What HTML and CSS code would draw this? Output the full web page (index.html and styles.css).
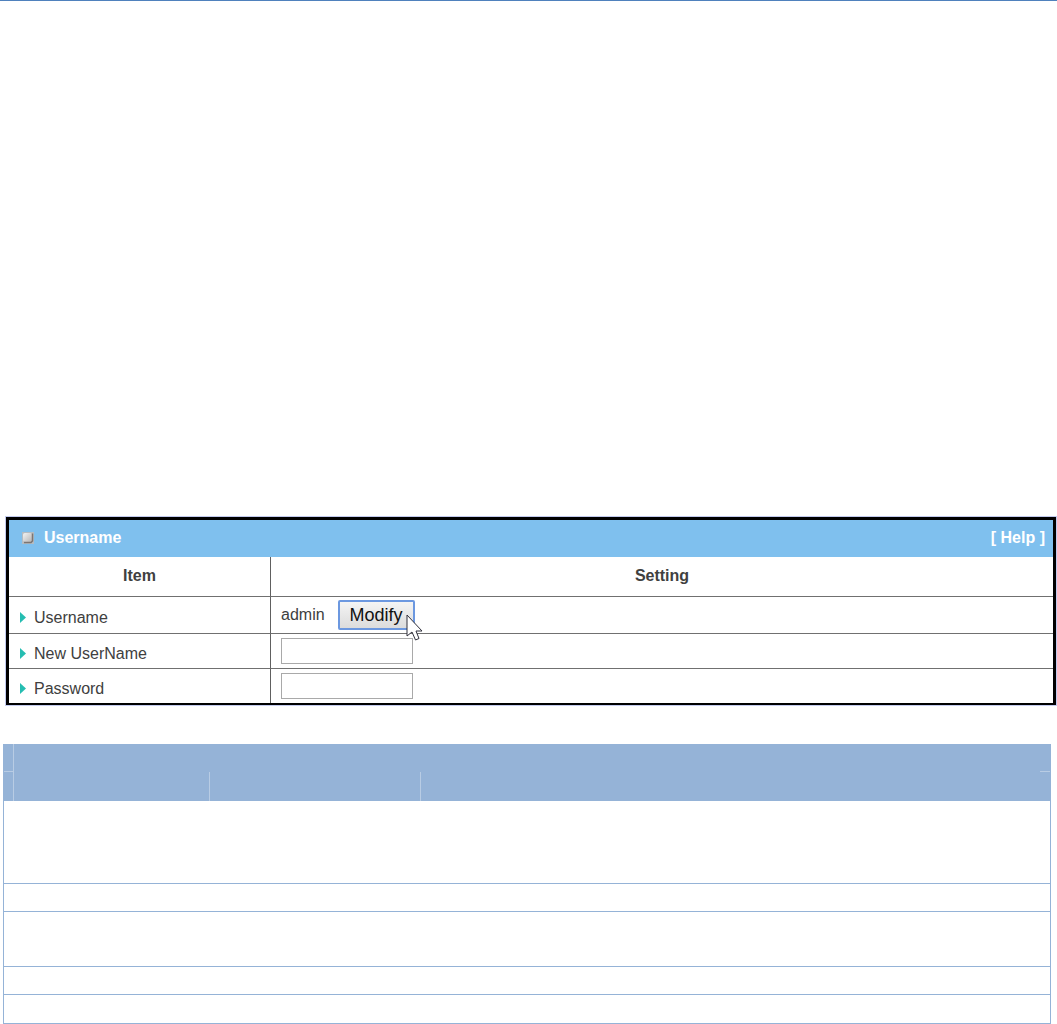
FILE: index.html
```html
<!DOCTYPE html>
<html lang="en">
<head>
<meta charset="utf-8">
<title>Username</title>
<link rel="stylesheet" href="styles.css">
</head>
<body>
<main class="page">
  <section class="panel">
    <header class="panel-head">
      <svg class="bullet" width="12" height="12" viewBox="0 0 12 12" aria-hidden="true">
        <defs><linearGradient id="g" x1="0" y1="0" x2="1" y2="1"><stop offset="0" stop-color="#f4f4f4"/><stop offset="1" stop-color="#b5b5b5"/></linearGradient></defs>
        <rect width="12" height="12" fill="#b4bcc2"/>
        <rect x="1" y="1" width="9" height="9" rx="2" fill="url(#g)"/>
        <path d="M10.500 1.500V9L9 10.500H2" fill="none" stroke="#7b7573" stroke-width="1.500"/>
      </svg>
      <h1 class="panel-title">Username</h1>
      <a class="help" href="#help">[ Help ]</a>
    </header>
    <table class="settings">
      <thead>
        <tr><th class="item" scope="col">Item</th><th scope="col">Setting</th></tr>
      </thead>
      <tbody>
        <tr class="row-tall">
          <th scope="row"><svg class="arrow" width="6" height="11" viewBox="0 0 6 11" aria-hidden="true"><path d="M0 0L6 5.500L0 11Z"/></svg>Username</th>
          <td>
            <div class="account">
              <span>admin</span>
              <span class="modify-wrap">
                <button class="modify" type="button">Modify</button>
                <svg class="cursor" width="17" height="28" viewBox="0 0 17 28" aria-hidden="true"><path d="M1 1V22L6 18L9.500 26L13 24.500L10 17H16Z"/></svg>
              </span>
            </div>
          </td>
        </tr>
        <tr>
          <th scope="row"><svg class="arrow" width="6" height="11" viewBox="0 0 6 11" aria-hidden="true"><path d="M0 0L6 5.500L0 11Z"/></svg><label for="new-name">New UserName</label></th>
          <td><input class="field" id="new-name" type="text"></td>
        </tr>
        <tr>
          <th scope="row"><svg class="arrow" width="6" height="11" viewBox="0 0 6 11" aria-hidden="true"><path d="M0 0L6 5.500L0 11Z"/></svg><label for="password">Password</label></th>
          <td><input class="field" id="password" type="password"></td>
        </tr>
      </tbody>
    </table>
  </section>

  <table class="details">
    <colgroup><col class="col-edge"><col class="col-name"><col class="col-value"><col><col class="col-edge"></colgroup>
    <thead>
      <tr class="head-top"><td class="rule-right rule-bottom"></td><td colspan="3"></td><td class="rule-bottom"></td></tr>
      <tr class="head-bottom"><td class="rule-right"></td><td class="rule-right"></td><td class="rule-right"></td><td colspan="2"></td></tr>
    </thead>
    <tbody>
      <tr class="lines-3"><td colspan="5"></td></tr>
      <tr class="lines-1"><td colspan="5"></td></tr>
      <tr class="lines-2"><td colspan="5"></td></tr>
      <tr class="lines-1"><td colspan="5"></td></tr>
      <tr class="lines-1"><td colspan="5"></td></tr>
    </tbody>
  </table>
</main>
</body>
</html>
```
FILE: styles.css
```css
* { box-sizing: border-box; }

body {
  margin: 0;
  background: #fff;
  color: #404040;
  font-family: "Liberation Sans", Arial, sans-serif;
  font-size: 16px;
  line-height: 20px;
}

.page {
  border-top: 1px solid #4f81bd;
  padding-top: 516px;
}

.panel {
  margin: 0 1px 39px 6px;
  border: 3px solid #000;
  border-bottom-width: 2px;
  box-shadow: 0 0 0 1px #c3cbee;
}

.panel-head {
  display: flex;
  align-items: center;
  height: 37px;
  padding: 0 8px 2px 13px;
  background: #7fc0ee;
  color: #fff;
}

.panel-title {
  flex: 1;
  margin: 0 0 0 10px;
  font-size: 16px;
}

.help {
  color: #fff;
  font-weight: bold;
  text-decoration: none;
}

.settings {
  width: 100%;
  border-collapse: separate;
  border-spacing: 0;
  table-layout: fixed;
}

.settings th,
.settings td {
  height: 35px;
  padding: 0 10px;
  border-bottom: 1px solid #707070;
  text-align: left;
  vertical-align: middle;
}

.settings thead th {
  height: 40px;
  padding-bottom: 2px;
  text-align: center;
}

.settings .item { width: 262px; }
.settings th:first-child { border-right: 1px solid #606060; }
.settings .row-tall > * { height: 37px; }
.settings tbody th { padding: 6px 10px 0 11px; font-weight: normal; }
.settings tbody tr:last-child > * { height: 34px; border-bottom: 0; }

.arrow {
  margin-right: 8px;
  fill: #25bdb1;
}

.account {
  display: flex;
  align-items: center;
  gap: 13px;
}

.modify-wrap {
  position: relative;
  display: flex;
}

.modify {
  width: 77px;
  height: 30px;
  padding: 0;
  border: 2px solid #6c98e0;
  border-radius: 2px;
  background: linear-gradient(#f4f4f4, #dcdcdc);
  color: #111;
  font: 18px/22px "Liberation Sans", Arial, sans-serif;
}

.cursor {
  position: absolute;
  top: 14px;
  right: -8px;
  z-index: 1;
  fill: #fff;
  stroke: #30303c;
  stroke-width: 1;
}

.field {
  display: block;
  width: 132px;
  height: 26px;
  padding: 2px 4px;
  border: 1px solid #a9a9a9;
  background: #fff;
  font: inherit;
}

.details {
  width: calc(100% - 9px);
  margin-left: 3px;
  border: 1px solid #95b3d7;
  border-top: 0;
  border-collapse: separate;
  border-spacing: 0;
  table-layout: fixed;
}

.details td { padding: 0; }
.details thead { background: #95b3d7; }
.details tbody td { border-bottom: 1px solid #95b3d7; }
.details tbody tr:last-child td { border-bottom: 0; }

.col-edge { width: 10px; }
.col-name { width: 196px; }
.col-value { width: 211px; }
.rule-right { border-right: 1px solid #b8cce4; }
.rule-bottom { border-bottom: 1px solid #b8cce4; }

.head-top { height: 28px; }
.head-bottom { height: 29px; }
.lines-1 { height: 28px; }
.lines-2 { height: 55px; }
.lines-3 { height: 83px; }
```
